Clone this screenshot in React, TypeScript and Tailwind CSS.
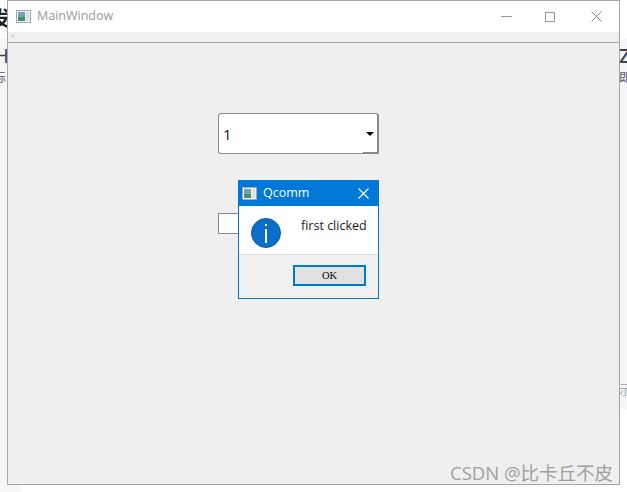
function AppIcon() {
  return (
    <svg width="15" height="13" viewBox="0 0 15 13" className="shrink-0">
      <rect x="0.5" y="0.5" width="14" height="12" fill="#f2f2f2" stroke="#a8a8a8" />
      <rect x="2" y="2" width="7" height="5" fill="#6fa3b5" />
      <rect x="2" y="7" width="7" height="4" fill="#4f8a70" />
      <rect x="10" y="2" width="3" height="9" fill="#d5e4e4" />
    </svg>
  );
}

function WinButtons() {
  return (
    <div className="ml-auto flex items-center">
      <svg width="11" height="1" className="mr-[33px]"><rect width="11" height="1" fill="#999" /></svg>
      <svg width="10" height="10" className="mr-[36px]"><rect x="0.5" y="0.5" width="9" height="9" fill="none" stroke="#999" /></svg>
      <svg width="11" height="11" className="mr-[17px]"><path d="M0.5 0.5 L10.5 10.5 M10.5 0.5 L0.5 10.5" stroke="#888" fill="none" /></svg>
    </div>
  );
}

function MessageBox() {
  return (
    <div className="absolute left-[230px] top-[137px] w-[141px] h-[119px] bg-[#f0f0f0] border border-[#0078d7] flex flex-col">
      <div className="h-[25px] bg-[#0078d7] flex items-center pl-[3px] text-white text-[12.5px] shrink-0">
        <AppIcon />
        <span className="ml-[6px]">Qcomm</span>
        <svg width="11" height="11" className="ml-auto mr-[9px]"><path d="M0.5 0.5 L10.5 10.5 M10.5 0.5 L0.5 10.5" stroke="#fff" strokeWidth="1.2" fill="none" /></svg>
      </div>
      <div className="h-[49px] bg-white border-b border-[#dfdfdf] flex items-start shrink-0">
        <svg width="30" height="30" viewBox="0 0 30 30" className="mt-[12px] ml-[12px] shrink-0">
          <circle cx="15" cy="15" r="14.5" fill="#0a6fc8" stroke="#0b5a9e" />
          <rect x="14" y="11" width="2" height="14" fill="#fff" />
          <rect x="14" y="6" width="2" height="2" fill="#fff" />
        </svg>
        <span className="ml-[20px] mt-[11px] text-[12.5px] text-[#1a1a1a]">first clicked</span>
      </div>
      <div className="flex justify-end pt-[10px] pr-[12px]">
        <div className="w-[73px] h-[21px] bg-[#e1e1e1] border-2 border-[#0078d7] flex items-center justify-center text-[10.5px] font-['Liberation_Serif',serif] text-black">
          OK
        </div>
      </div>
    </div>
  );
}

function MainWindow() {
  return (
    <div className="w-[613px] h-[485px] border border-[#a6a6a6] bg-[#efefef] flex flex-col">
      <div className="h-[31px] bg-white flex items-center pl-[8px] shrink-0">
        <AppIcon />
        <span className="ml-[6px] text-[12.5px] text-[#9a9a9a]">MainWindow</span>
        <WinButtons />
      </div>
      <div className="h-[11px] bg-[#f0f0f0] border-b border-[#a6a6a6] shrink-0 pl-[4px] pt-[3px]">
        <div className="w-[2px] h-[2px] bg-[#c4c4c4]" />
      </div>
      <div className="relative flex-1 flex flex-col pl-[210px] pt-[70px]">
        <div className="relative w-[161px] h-[41px] rounded-[3px] bg-white border border-[#8a8a8a] border-r-2 flex items-center justify-between pl-[4px] pr-[3px] pt-[2px] text-[15px] text-[#222]">
          1
          <span className="w-0 h-0 mb-[2px] border-x-[4px] border-x-transparent border-t-[4px] border-t-black" />
          <div className="absolute right-[-2px] bottom-[-1px] w-[16px] h-[2px] bg-[#8a8a8a]" />
        </div>
        <div className="w-[30px] h-[21px] mt-[59px] bg-white border border-[#8a8a8a]" />
        <MessageBox />
      </div>
    </div>
  );
}

export default function App() {
  return (
    <div className="relative w-[627px] h-[492px] bg-white overflow-hidden font-['Open_Sans','Noto_Sans',sans-serif]">
      {/* page behind the window */}
      <div className="absolute left-0 top-[39px] w-[21px] h-[453px] bg-[#f5f6f8] text-[#3c3f52] overflow-hidden">
        <div className="absolute left-[-6px] top-[7px] text-[20px] leading-none">H</div>
        <div className="absolute left-[-6px] top-[32px] text-[12px] leading-none text-[#5a5a70] font-['Noto_Sans_CJK_SC',sans-serif]">标</div>
      </div>
      <div className="absolute left-[-10px] top-[8px] text-[20px] leading-none font-bold text-[#222] font-['Noto_Sans_CJK_SC',sans-serif]">发</div>
      <div className="absolute right-0 top-[39px] w-[8px] h-[370px] bg-[#f5f6f8] overflow-hidden text-[#3c3f52]">
        <div className="absolute left-0 top-[7px] text-[20px] leading-none font-semibold">Z</div>
        <div className="absolute left-0 top-[32px] text-[12px] leading-none text-[#5a5a70] font-['Noto_Sans_CJK_SC',sans-serif]">即</div>
        <div className="absolute left-0 top-[343px] text-[13px] leading-none text-[#aaa] font-['Noto_Sans_CJK_SC',sans-serif]">示</div>
      </div>
      <div className="absolute left-[7px] top-0">
        <MainWindow />
      </div>
      <div className="absolute left-[450px] top-[461px] text-[18.5px] leading-[24px] text-[#a0a0a0] font-['Open_Sans','Noto_Sans_CJK_SC',sans-serif]">
        CSDN @比卡丘不皮
      </div>
    </div>
  );
}
